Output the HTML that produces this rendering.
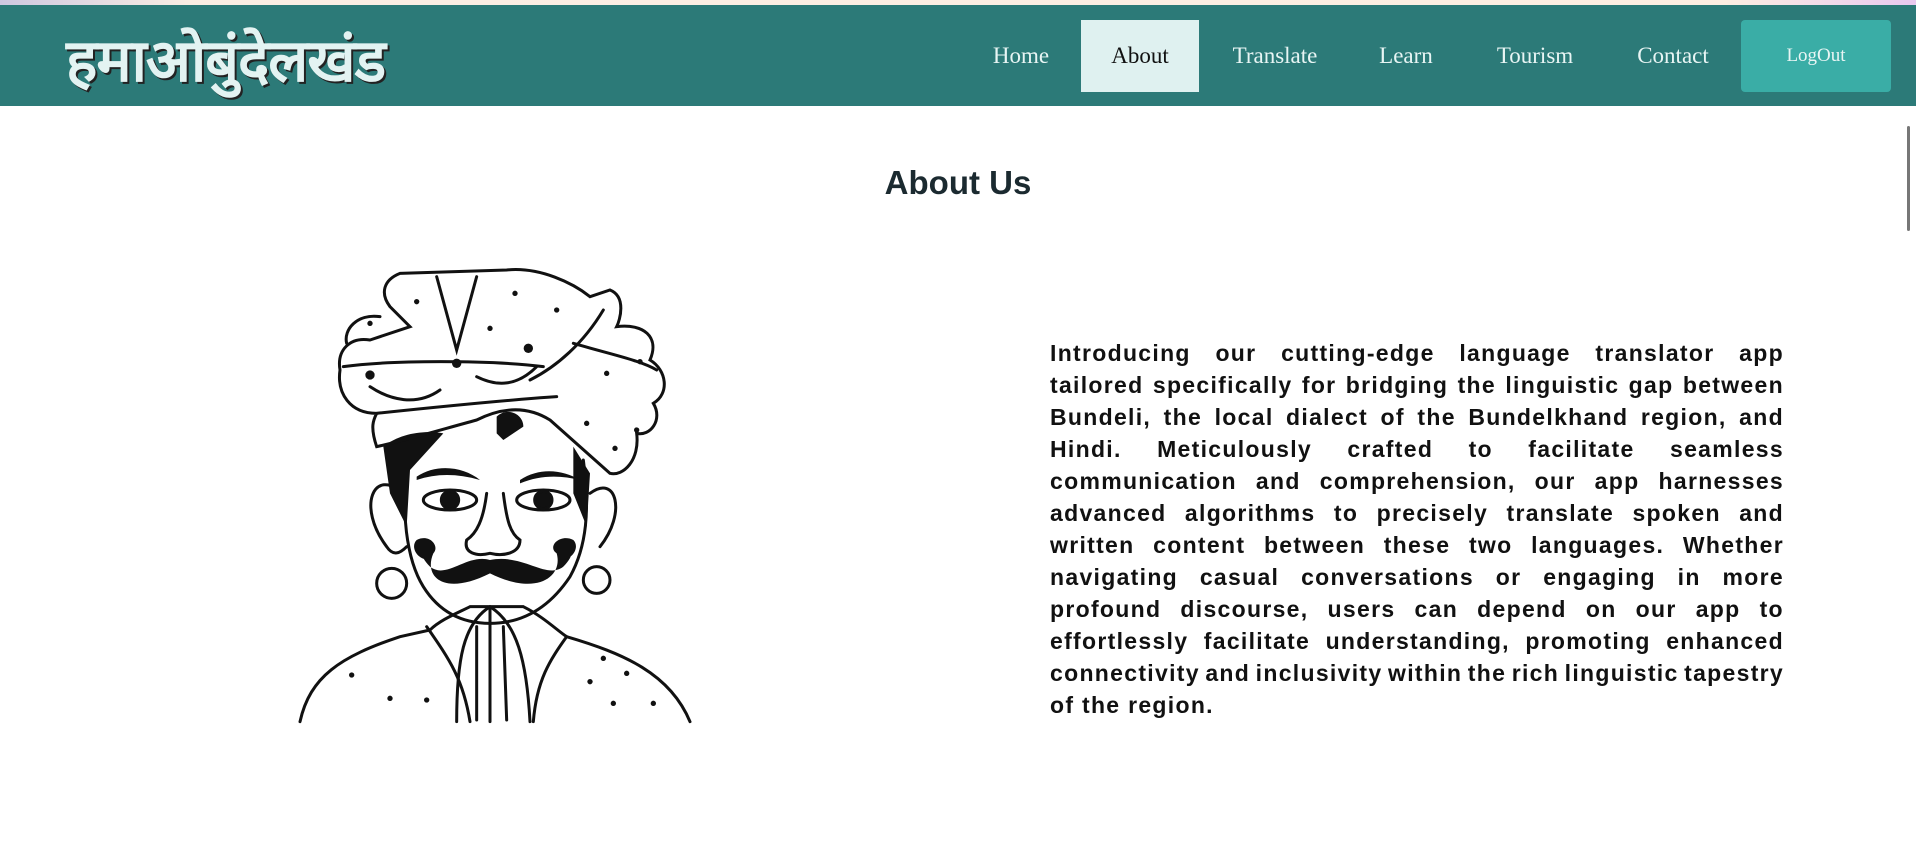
<!DOCTYPE html>
<html><head><meta charset="utf-8"><style>
*{margin:0;padding:0;box-sizing:border-box}
body{width:1916px;height:866px;background:#fff;position:relative;overflow:hidden;font-family:"Liberation Sans",sans-serif}
.top{position:absolute;left:0;top:0;width:1916px;height:5px;background:linear-gradient(90deg,#cfc8e0,#fbeee4 10%,#fdeee2 90%,#e9c9ef)}
nav{position:absolute;left:0;top:5px;width:1916px;height:101px;background:#2c7a78}
.logo{position:absolute;left:66px;top:14px;font-family:"Liberation Sans","Noto Sans CJK SC",sans-serif;font-weight:bold;font-size:59px;color:#e3f3f2;text-shadow:2px 2px 0 #222;letter-spacing:-1px;white-space:nowrap}
.nl{position:absolute;top:15px;height:72px;line-height:72px;font-family:"Liberation Serif",serif;font-size:23px;color:#e8f5f4;text-align:center}
.act{background:#dff1f0;color:#111}
.lo{background:#3aada6;border-radius:4px;font-size:19px}
h1{position:absolute;left:0;width:1916px;top:164px;text-align:center;font-size:33px;font-weight:bold;color:#1b2a30}
.txt{position:absolute;left:1050px;top:337px;width:734px;font-size:23px;letter-spacing:1.3px;font-weight:bold;line-height:32px;color:#111}
.txt div{white-space:nowrap;display:flex;justify-content:space-between}
.txt div.l{justify-content:flex-start}
.sb{position:absolute;right:0;top:106px;width:14px;height:760px;background:#fff}
.sb div{position:absolute;left:5px;top:20px;width:3px;height:105px;background:#777;border-radius:2px}
</style></head><body>
<div class="top"></div>
<nav>
<div class="logo">हमाओबुंदेलखंड</div>
<div class="nl" style="left:975px;width:92px">Home</div>
<div class="nl act" style="left:1081px;width:118px">About</div>
<div class="nl" style="left:1212px;width:126px">Translate</div>
<div class="nl" style="left:1360px;width:92px">Learn</div>
<div class="nl" style="left:1480px;width:110px">Tourism</div>
<div class="nl" style="left:1620px;width:106px">Contact</div>
<div class="nl lo" style="left:1741px;width:150px">LogOut</div>
</nav>
<h1>About Us</h1>
<svg style="position:absolute;left:290px;top:260px" width="420" height="470" viewBox="0 0 1260 1410" fill="none" stroke="#111" stroke-width="9" stroke-linecap="round">
<path d="M30 1385 C60 1250 150 1190 330 1130 L420 1110 C450 1080 500 1060 540 1040 L700 1040 C760 1070 800 1110 830 1130 C1000 1180 1140 1240 1200 1385"/>
<path d="M410 1100 C480 1200 520 1260 540 1385 M830 1130 C780 1200 740 1260 730 1385"/>
<path d="M500 1385 C500 1200 520 1090 600 1040 C680 1090 710 1200 720 1385 M600 1050 L600 1385 M560 1100 L560 1380 M640 1100 L650 1380"/>
<path d="M355 600 C330 750 350 900 400 980 C450 1060 520 1090 600 1090 C700 1090 780 1040 840 950 C890 860 900 750 880 600"/>
<path d="M340 700 C250 620 200 740 290 860 C310 890 330 880 350 860 M900 700 C980 640 1010 760 930 860"/>
<circle cx="305" cy="970" r="45"/><circle cx="920" cy="960" r="40"/>
<path fill="#111" stroke="none" d="M280 560 C330 520 400 510 460 520 L360 630 L350 800 L300 700 Z M850 560 L900 640 L890 800 L850 700 Z"/>
<path fill="#111" stroke="none" d="M380 650 C440 610 520 620 570 660 C500 640 440 640 380 660 Z M690 660 C750 620 820 630 870 660 C810 645 750 645 690 670 Z"/>
<ellipse cx="480" cy="720" rx="80" ry="30"/><ellipse cx="760" cy="720" rx="80" ry="30"/>
<circle cx="480" cy="720" r="26" fill="#111"/><circle cx="760" cy="720" r="26" fill="#111"/>
<path d="M590 700 C580 780 560 820 530 840 C520 880 560 890 600 880 C640 890 690 880 690 840 C660 820 650 780 640 700"/>
<path fill="#111" stroke="none" d="M600 900 C530 880 470 960 420 920 C380 880 390 850 430 860 C400 870 400 900 420 900 C380 900 360 860 380 840 C420 820 450 860 430 880 C400 950 460 1010 600 940 C740 1010 820 950 800 880 C770 860 810 820 850 840 C870 860 850 900 810 900 C840 900 840 870 810 860 C850 850 860 880 820 920 C770 960 700 880 600 900 Z"/>
<path d="M150 330 C140 270 180 230 240 240 L360 200 L300 140 C270 100 280 60 330 40 L650 30 C750 20 850 70 900 110 L960 90 C1010 110 990 180 980 200 C1060 190 1110 230 1080 300 C1130 330 1140 400 1090 430 C1120 480 1080 530 1040 520 C1050 600 1000 650 960 640 L780 480 C700 430 620 450 560 480 C450 510 350 540 260 560 C240 500 250 480 260 460 C180 460 140 400 150 330 Z"/>
<path d="M270 170 C200 160 160 210 170 250 M160 320 C300 300 600 300 760 320 M260 460 C450 440 650 420 800 410 M440 50 L500 270 L560 50 M720 360 C800 320 880 250 940 150 M850 250 C950 280 1050 300 1100 330"/>
<path d="M240 380 C300 420 380 440 450 390 M560 350 C620 380 680 380 740 320"/>
<g fill="#111" stroke="none"><circle cx="240" cy="190" r="8"/><circle cx="380" cy="125" r="8"/><circle cx="675" cy="100" r="8"/><circle cx="800" cy="150" r="8"/><circle cx="600" cy="205" r="8"/><circle cx="1050" cy="305" r="8"/><circle cx="950" cy="340" r="8"/><circle cx="890" cy="490" r="8"/><circle cx="1040" cy="510" r="8"/><circle cx="975" cy="565" r="8"/><circle cx="185" cy="1245" r="8"/><circle cx="300" cy="1315" r="8"/><circle cx="410" cy="1320" r="8"/><circle cx="940" cy="1195" r="8"/><circle cx="1010" cy="1240" r="8"/><circle cx="900" cy="1265" r="8"/><circle cx="970" cy="1330" r="8"/><circle cx="1090" cy="1330" r="8"/><circle cx="240" cy="345" r="14"/><circle cx="500" cy="310" r="14"/><circle cx="715" cy="265" r="14"/><path d="M620 470 C650 440 700 460 700 500 L640 540 L620 520 Z"/></g>
</svg>
<div class="txt">
<div><span>Introducing</span><span>our</span><span>cutting-edge</span><span>language</span><span>translator</span><span>app</span></div>
<div><span>tailored</span><span>specifically</span><span>for</span><span>bridging</span><span>the</span><span>linguistic</span><span>gap</span><span>between</span></div>
<div><span>Bundeli,</span><span>the</span><span>local</span><span>dialect</span><span>of</span><span>the</span><span>Bundelkhand</span><span>region,</span><span>and</span></div>
<div><span>Hindi.</span><span>Meticulously</span><span>crafted</span><span>to</span><span>facilitate</span><span>seamless</span></div>
<div><span>communication</span><span>and</span><span>comprehension,</span><span>our</span><span>app</span><span>harnesses</span></div>
<div><span>advanced</span><span>algorithms</span><span>to</span><span>precisely</span><span>translate</span><span>spoken</span><span>and</span></div>
<div><span>written</span><span>content</span><span>between</span><span>these</span><span>two</span><span>languages.</span><span>Whether</span></div>
<div><span>navigating</span><span>casual</span><span>conversations</span><span>or</span><span>engaging</span><span>in</span><span>more</span></div>
<div><span>profound</span><span>discourse,</span><span>users</span><span>can</span><span>depend</span><span>on</span><span>our</span><span>app</span><span>to</span></div>
<div><span>effortlessly</span><span>facilitate</span><span>understanding,</span><span>promoting</span><span>enhanced</span></div>
<div><span>connectivity</span><span>and</span><span>inclusivity</span><span>within</span><span>the</span><span>rich</span><span>linguistic</span><span>tapestry</span></div>
<div class="l">of the region.</div>
</div>
<div class="sb"><div></div></div>
</body></html>
